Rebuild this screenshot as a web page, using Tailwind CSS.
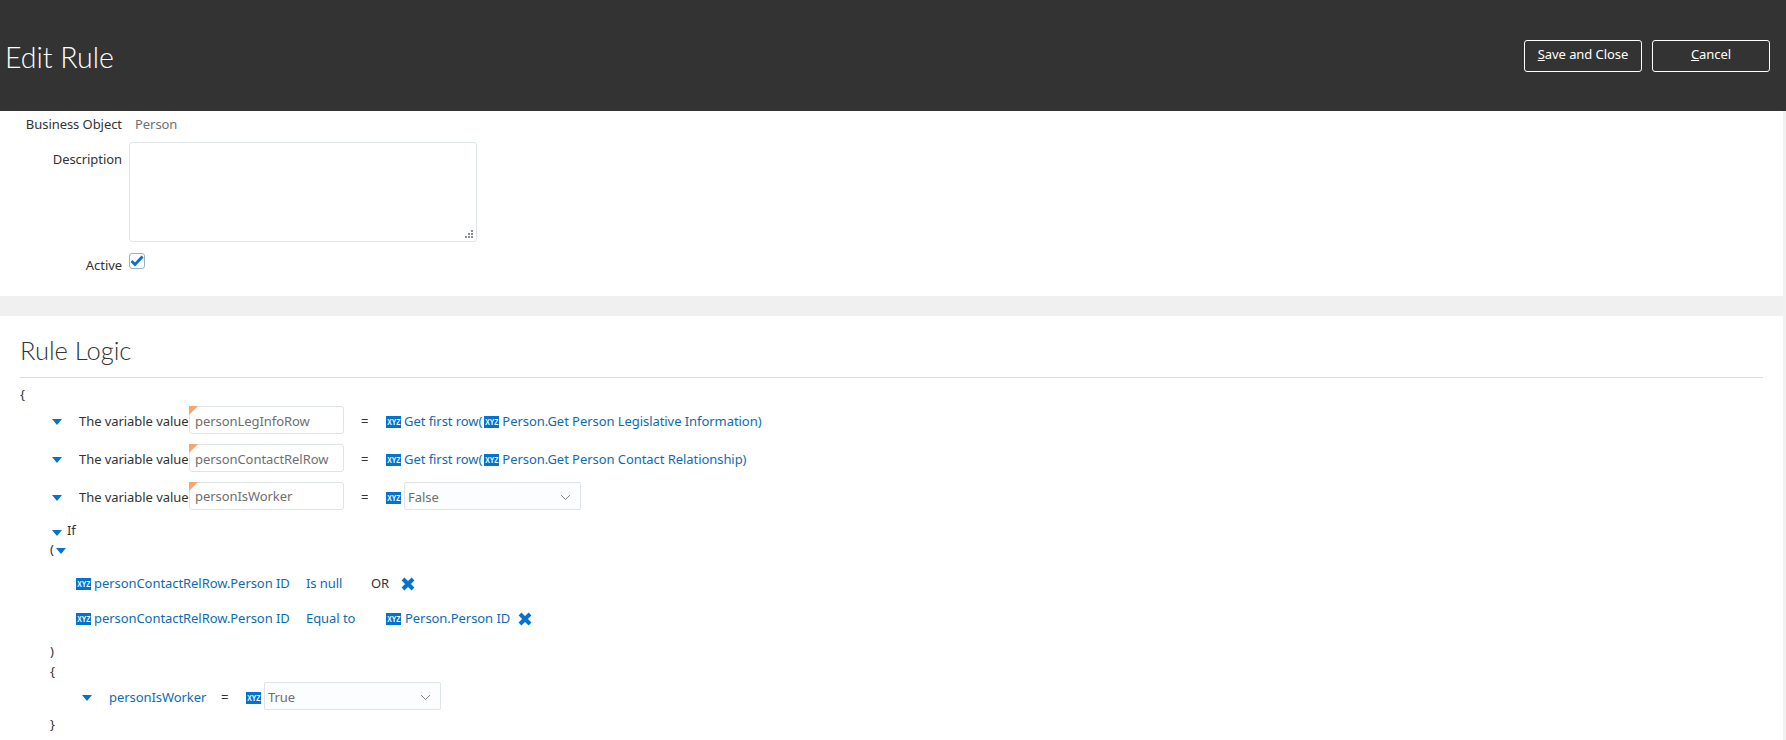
<!DOCTYPE html>
<html lang="en">
<head>
    <meta charset="UTF-8">
    <title>Edit Rule</title>
    <script src="https://cdn.jsdelivr.net/npm/@tailwindcss/browser@4"></script>
</head>
<body class="w-[1786px] h-[740px] overflow-hidden bg-white font-['Noto_Sans',sans-serif] text-[13px] tracking-[-0.06px] text-[#333333]">
    <header class="h-[111px] bg-[#333333] flex items-center justify-between pl-[5px] pr-[16px] pt-[5px]">
        <h1 class="font-['Lato',sans-serif] text-[28.5px] font-light tracking-normal text-white leading-none pb-[2px]">Edit Rule</h1>
        <div class="flex gap-[10px] -mt-[4px]">
            <button class="w-[118px] h-[32px] pb-[2px] border border-white rounded-[3px] text-white text-[13px]"><u>S</u>ave and Close</button>
            <button class="w-[118px] h-[32px] pb-[2px] border border-white rounded-[3px] text-white text-[13px]"><u>C</u>ancel</button>
        </div>
    </header>

    <div class="flex">
        <main class="flex-1">
            <!-- rule details -->
            <section class="h-[185px]">
                <div class="flex items-center h-[26px] pt-[2px]">
                    <span class="w-[122px] text-right">Business Object</span>
                    <span class="ml-[13px] text-[#6f6f6f]">Person</span>
                </div>
                <div class="flex mt-[5px]">
                    <span class="w-[122px] text-right pt-[8px]">Description</span>
                    <div class="relative ml-[7px] w-[348px] h-[100px]">
                        <textarea class="block w-full h-full resize-none border border-[#dfe4e7] rounded-[3px] bg-white"></textarea>
                        <svg class="absolute right-[3px] bottom-[3px]" width="9" height="9" viewBox="0 0 9 9" fill="#8a8f94"><rect x="6" y="0" width="2" height="2"/><rect x="3" y="3" width="2" height="2"/><rect x="6" y="3" width="2" height="2"/><rect x="0" y="6" width="2" height="2"/><rect x="3" y="6" width="2" height="2"/><rect x="6" y="6" width="2" height="2"/></svg>
                    </div>
                </div>
                <div class="flex mt-[11px]">
                    <span class="w-[122px] text-right pt-[3px]">Active</span>
                    <span class="ml-[7px] w-[16px] h-[16px] border border-[#9fb0bb] rounded-[3px] flex items-center justify-center">
                        <svg width="14" height="12" viewBox="0 0 14 12"><path d="M1.5 6 L5 9.5 L12.5 1.5" fill="none" stroke="#0572ce" stroke-width="2.8"/></svg>
                    </span>
                </div>
            </section>

            <div class="h-[20px] bg-[#f0f0f0]"></div>

            <!-- rule logic -->
            <section class="px-[20px]">
                <h2 class="h-[62px] flex items-center pt-[12px] pb-[4px] border-b border-[#d9dfe3] font-['Lato',sans-serif] text-[25.5px] font-light tracking-normal text-[#333333]">Rule Logic</h2>

                <div class="mt-[7px] h-[18px] leading-[18px]">{</div>

                <div class="mt-[3px] flex items-center h-[28px]">
                    <svg class="ml-[32px] mt-[3px]" width="10" height="6" viewBox="0 0 10 6" fill="#0572ce"><polygon points="0,0 10,0 5,6"/></svg>
                    <span class="ml-[17px] w-[110px] whitespace-nowrap mt-[3px]">The variable value</span>
                    <div class="relative w-[155px] h-[28px] border border-[#dfe4e7] rounded-[3px] flex items-center pl-[5px] pt-[3px] text-[#6f6f6f]">
                        <span class="absolute -left-px -top-px w-0 h-0 border-t-[9px] border-r-[9px] border-t-[#f7a56f] border-r-transparent"></span>
                        personLegInfoRow
                    </div>
                    <span class="ml-[17px] w-[25px] mt-[3px]">=</span>
                    <span class="mt-[4px] w-[15px] h-[12px] shrink-0 bg-[#0572ce] text-white font-['Liberation_Sans',sans-serif] flex items-center justify-center"><span class="scale-x-75 font-bold text-[9px] leading-none tracking-normal whitespace-nowrap">XYZ</span></span>
                    <span class="ml-[3px] text-[#0d6cb5] mt-[3px]">Get first row(</span>
                    <span class="mt-[4px] ml-[2px] w-[15px] h-[12px] shrink-0 bg-[#0572ce] text-white font-['Liberation_Sans',sans-serif] flex items-center justify-center"><span class="scale-x-75 font-bold text-[9px] leading-none tracking-normal whitespace-nowrap">XYZ</span></span>
                    <span class="ml-[3px] text-[#0d6cb5] mt-[3px]">Person.Get Person Legislative Information)</span>
                </div>

                <div class="mt-[10px] flex items-center h-[28px]">
                    <svg class="ml-[32px] mt-[3px]" width="10" height="6" viewBox="0 0 10 6" fill="#0572ce"><polygon points="0,0 10,0 5,6"/></svg>
                    <span class="ml-[17px] w-[110px] whitespace-nowrap mt-[3px]">The variable value</span>
                    <div class="relative w-[155px] h-[28px] border border-[#dfe4e7] rounded-[3px] flex items-center pl-[5px] pt-[3px] text-[#6f6f6f]">
                        <span class="absolute -left-px -top-px w-0 h-0 border-t-[9px] border-r-[9px] border-t-[#f7a56f] border-r-transparent"></span>
                        personContactRelRow
                    </div>
                    <span class="ml-[17px] w-[25px] mt-[3px]">=</span>
                    <span class="mt-[4px] w-[15px] h-[12px] shrink-0 bg-[#0572ce] text-white font-['Liberation_Sans',sans-serif] flex items-center justify-center"><span class="scale-x-75 font-bold text-[9px] leading-none tracking-normal whitespace-nowrap">XYZ</span></span>
                    <span class="ml-[3px] text-[#0d6cb5] mt-[3px]">Get first row(</span>
                    <span class="mt-[4px] ml-[2px] w-[15px] h-[12px] shrink-0 bg-[#0572ce] text-white font-['Liberation_Sans',sans-serif] flex items-center justify-center"><span class="scale-x-75 font-bold text-[9px] leading-none tracking-normal whitespace-nowrap">XYZ</span></span>
                    <span class="ml-[3px] text-[#0d6cb5] mt-[3px]">Person.Get Person Contact Relationship)</span>
                </div>

                <div class="mt-[10px] flex items-center h-[28px]">
                    <svg class="ml-[32px] mt-[3px]" width="10" height="6" viewBox="0 0 10 6" fill="#0572ce"><polygon points="0,0 10,0 5,6"/></svg>
                    <span class="ml-[17px] w-[110px] whitespace-nowrap mt-[3px]">The variable value</span>
                    <div class="relative w-[155px] h-[28px] border border-[#dfe4e7] rounded-[3px] flex items-center pl-[5px] pt-[2px] text-[#6f6f6f]">
                        <span class="absolute -left-px -top-px w-0 h-0 border-t-[9px] border-r-[9px] border-t-[#f7a56f] border-r-transparent"></span>
                        personIsWorker
                    </div>
                    <span class="ml-[17px] w-[25px] mt-[3px]">=</span>
                    <span class="mt-[4px] w-[15px] h-[12px] shrink-0 bg-[#0572ce] text-white font-['Liberation_Sans',sans-serif] flex items-center justify-center"><span class="scale-x-75 font-bold text-[9px] leading-none tracking-normal whitespace-nowrap">XYZ</span></span>
                    <div class="ml-[3px] w-[177px] h-[28px] border border-[#dfe4e7] rounded-[2px] bg-[#fbfdff] flex items-center justify-between pl-[3px] pr-[9px] pt-[3px] text-[#6f6f6f]">
                        False
                        <svg width="11" height="7" viewBox="0 0 11 7"><path d="M1 1 L5.5 5.5 L10 1" fill="none" stroke="#7d8285" stroke-width="1"/></svg>
                    </div>
                </div>

                <div class="mt-[12px] flex items-center h-[18px]">
                    <svg class="ml-[32px] mt-[3px]" width="10" height="6" viewBox="0 0 10 6" fill="#0572ce"><polygon points="0,0 10,0 5,6"/></svg>
                    <span class="ml-[5px]">If</span>
                </div>
                <div class="mt-[1px] flex items-center h-[18px]">
                    <span class="ml-[30px]">(</span>
                    <svg class="ml-[2px] mt-[1px]" width="10" height="6" viewBox="0 0 10 6" fill="#0572ce"><polygon points="0,0 10,0 5,6"/></svg>
                </div>

                <div class="mt-[16px] flex items-center h-[18px]">
                    <span class="ml-[56px] w-[15px] h-[12px] shrink-0 bg-[#0572ce] text-white font-['Liberation_Sans',sans-serif] flex items-center justify-center"><span class="scale-x-75 font-bold text-[9px] leading-none tracking-normal whitespace-nowrap">XYZ</span></span>
                    <span class="ml-[3px] w-[212px] text-[#0d6cb5]">personContactRelRow.Person ID</span>
                    <span class="w-[65px] text-[#0d6cb5]">Is null</span>
                    <span class="w-[30px]">OR</span>
                    <svg width="14" height="14" viewBox="0 0 14 14"><path d="M2 2 L12 12 M12 2 L2 12" stroke="#0572ce" stroke-width="4"/></svg>
                </div>
                <div class="mt-[17px] flex items-center h-[18px]">
                    <span class="ml-[56px] w-[15px] h-[12px] shrink-0 bg-[#0572ce] text-white font-['Liberation_Sans',sans-serif] flex items-center justify-center"><span class="scale-x-75 font-bold text-[9px] leading-none tracking-normal whitespace-nowrap">XYZ</span></span>
                    <span class="ml-[3px] w-[212px] text-[#0d6cb5]">personContactRelRow.Person ID</span>
                    <span class="w-[80px] text-[#0d6cb5]">Equal to</span>
                    <span class="w-[15px] h-[12px] shrink-0 bg-[#0572ce] text-white font-['Liberation_Sans',sans-serif] flex items-center justify-center"><span class="scale-x-75 font-bold text-[9px] leading-none tracking-normal whitespace-nowrap">XYZ</span></span>
                    <span class="ml-[4px] w-[113px] text-[#0d6cb5]">Person.Person ID</span>
                    <svg width="14" height="14" viewBox="0 0 14 14"><path d="M2 2 L12 12 M12 2 L2 12" stroke="#0572ce" stroke-width="4"/></svg>
                </div>

                <div class="mt-[14px] ml-[30px] h-[18px] leading-[18px]">)</div>
                <div class="mt-[2px] ml-[30px] h-[18px] leading-[18px]">{</div>

                <div class="mt-[2px] flex items-center h-[28px]">
                    <svg class="ml-[62px] mt-[3px]" width="10" height="6" viewBox="0 0 10 6" fill="#0572ce"><polygon points="0,0 10,0 5,6"/></svg>
                    <span class="ml-[17px] w-[112px] text-[#0d6cb5] mt-[3px]">personIsWorker</span>
                    <span class="w-[25px] mt-[3px]">=</span>
                    <span class="mt-[4px] w-[15px] h-[12px] shrink-0 bg-[#0572ce] text-white font-['Liberation_Sans',sans-serif] flex items-center justify-center"><span class="scale-x-75 font-bold text-[9px] leading-none tracking-normal whitespace-nowrap">XYZ</span></span>
                    <div class="ml-[3px] w-[177px] h-[28px] border border-[#dfe4e7] rounded-[2px] bg-[#fbfdff] flex items-center justify-between pl-[3px] pr-[9px] pt-[3px] text-[#6f6f6f]">
                        True
                        <svg width="11" height="7" viewBox="0 0 11 7"><path d="M1 1 L5.5 5.5 L10 1" fill="none" stroke="#7d8285" stroke-width="1"/></svg>
                    </div>
                </div>

                <div class="mt-[5px] ml-[30px] h-[18px] leading-[18px]">}</div>
            </section>
        </main>
        <div class="w-[3px] h-[629px] bg-[#f1f1f1]"></div>
    </div>
</body>
</html>
